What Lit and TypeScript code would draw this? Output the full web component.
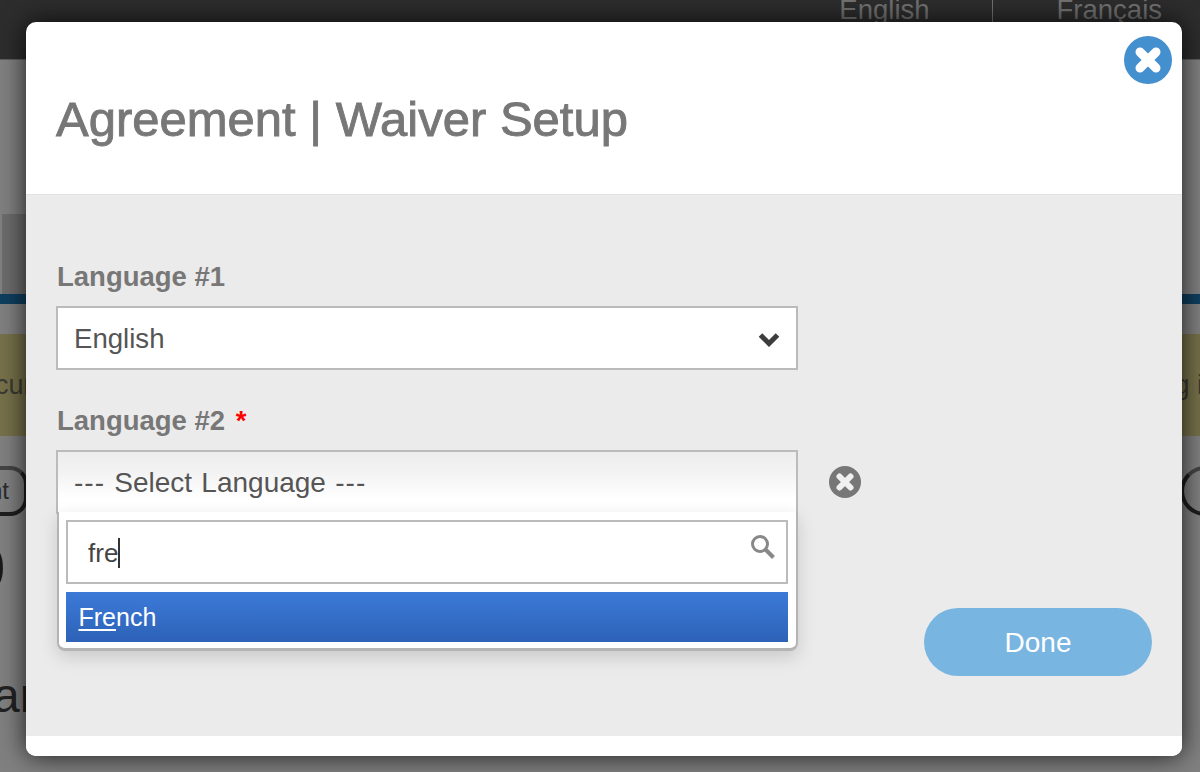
import { LitElement, html, css } from "lit";
import { customElement } from "lit/decorators.js";

const FONT = css`"Liberation Sans", Arial, sans-serif`;

@customElement("app-root")
export class AppRoot extends LitElement {
  static styles = css`
    :host { display: block; position: relative; width: 1200px; height: 772px; overflow: hidden; font-family: ${FONT}; background: #808080; }
    .page { height: 772px; display: flex; flex-direction: column; overflow: hidden; background: #808080; }
    .topbar { height: 60px; flex: none; background: #2d2d2d; display: flex; justify-content: flex-end; overflow: hidden; color: #737373; font-size: 27.5px; line-height: 24px; padding-right: 38px; box-sizing: border-box; border-bottom: 1px solid #5e5e5e; }
    .topbar span { display: block; margin-top: -2px; }
    .topbar .sep { width: 1px; height: 24px; background: #737373; margin: 0 64px 0 62px; }
    .tab { height: 80px; margin-top: 154px; background: #6c6c6c; width: 30px; margin-left: 2px; flex: none; }
    .line { height: 10px; flex: none; background: #0f3f5f; }
    .band { height: 102px; margin-top: 30px; flex: none; background: #76714a; display: flex; justify-content: space-between; align-items: center; font-size: 27px; color: #3a3a32; overflow: hidden; }
    .band span { white-space: nowrap; }
    .band .l { margin-left: -5px; }
    .band .r { margin-right: -18px; }
    .pills { height: 50px; margin-top: 30px; flex: none; display: flex; justify-content: space-between; }
    .pill { width: 70px; box-sizing: border-box; border: 4px solid #1e1e1e; border-top-color: #444; border-radius: 18px; font-size: 24px; line-height: 42px; color: #2a2a2a; text-align: right; padding-right: 15px; white-space: nowrap; }
    .pill.a { margin-left: -42px; }
    .pill.b { margin-right: -50px; border-radius: 25px; }
    .big { margin: 22px 0 0 -29px; font-size: 62px; line-height: 60px; font-weight: 700; color: #1a1a1a; flex: none; }
    .word { margin: 68px 0 0 -7px; font-size: 48px; line-height: 60px; color: #222; flex: none; }

    .modal { position: absolute; left: 26px; top: 22px; width: 1156px; height: 734px; background: #fff; border-radius: 10px; box-shadow: 0 0 26px rgba(0,0,0,.8); display: flex; flex-direction: column; overflow: hidden; }
    .head { height: 173px; flex: none; box-sizing: border-box; border-bottom: 1px solid #e2e2e2; padding: 69px 30px 0; }
    h1 { margin: 0; font-size: 49px; line-height: 56px; font-weight: 400; color: #777; -webkit-text-stroke: .9px #777; }
    .x { position: absolute; right: 10px; top: 14px; width: 48px; height: 48px; }
    .body { height: 541px; flex: none; background: #ebebeb; box-sizing: border-box; padding: 67px 30px 0; position: relative; }
    label { display: block; font-size: 27.5px; line-height: 30px; font-weight: 700; color: #777; padding-left: 1px; }
    label b { color: #f00; margin-left: 3px; }
    .field { width: 742px; height: 64px; box-sizing: border-box; border: 2px solid #bbb; background: #fff; margin-top: 14px; display: flex; align-items: center; justify-content: space-between; padding: 2px 16px 0; font-size: 27.6px; color: #555; }
    .l2 { margin-top: 36px; }
    .select2 { background: linear-gradient(#ededed, #f3f3f3 35%, #fff 75%); border-bottom: 0; font-size: 28px; padding-top: 0; word-spacing: 1.5px; }
    .dash { letter-spacing: 1px; }
    .row { display: flex; align-items: center; gap: 30px; }
    .clear { width: 34px; height: 34px; margin-top: 14px; }
    .drop { position: absolute; left: 31px; top: 317px; width: 741px; height: 139px; box-sizing: border-box; background: #fff; border: 2px solid #b4b4b4; border-top: 0; border-bottom-width: 3px; border-radius: 0 0 8px 8px; padding: 8px 8px 0 7px; box-shadow: 0 6px 18px rgba(0,0,0,.15); }
    .search { height: 64px; box-sizing: border-box; border: 2px solid #bbb; background: #fff; display: flex; align-items: center; justify-content: space-between; padding: 0 10px 0 20px; font-size: 26px; color: #444; }
    .typed { display: flex; align-items: center; padding-top: 2px; }
    .caret { width: 2px; height: 30px; background: #333; }
    .opt { height: 50px; margin-top: 8px; background: linear-gradient(#3c7ad8, #2d62b7); color: #fff; font-size: 25px; line-height: 50px; padding-left: 12.5px; }
    .opt u { text-underline-offset: 3px; }
    .done { position: absolute; left: 898px; top: 413px; width: 228px; height: 68px; border: 0; padding: 2px 0 0; border-radius: 34px; background: #79b5e1; color: #fff; font: 28px ${FONT}; }
    .foot { flex: 1; background: #fff; }
    .glass { margin-top: -10px; }
  `;

  render() {
    return html`
      <div class="page">
        <div class="topbar"><span>English</span><span class="sep"></span><span>Français</span></div>
        <div class="tab"></div>
        <div class="line"></div>
        <div class="band"><span class="l">cur</span><span class="r">g in</span></div>
        <div class="pills"><div class="pill a">nt</div><div class="pill b"></div></div>
        <div class="big">0</div>
        <div class="word">ar</div>
      </div>
      <div class="modal">
        <div class="head"><h1>Agreement | Waiver Setup</h1></div>
        <svg class="x" viewBox="0 0 48 48"><circle cx="24" cy="24" r="24" fill="#4490cf"/><path d="M16 16 L32 32 M32 16 L16 32" stroke="#fff" stroke-width="9" stroke-linecap="round"/></svg>
        <div class="body">
          <label>Language #1</label>
          <div class="field"><span>English</span>
            <svg width="22" height="18" viewBox="0 0 22 18"><path d="M2.5 5 L11 13.5 L19.5 5" fill="none" stroke="#3d3d3d" stroke-width="5"/></svg>
          </div>
          <label class="l2">Language #2 <b>*</b></label>
          <div class="row">
            <div class="field select2"><span><span class="dash">---</span> Select Language <span class="dash">---</span></span></div>
            <svg class="clear" viewBox="0 0 34 34"><circle cx="17" cy="17" r="16" fill="#777"/><path d="M11.5 11.5 L22.5 22.5 M22.5 11.5 L11.5 22.5" stroke="#f0f0f0" stroke-width="6" stroke-linecap="round"/></svg>
          </div>
          <div class="drop">
            <div class="search"><span class="typed">fre<i class="caret"></i></span>
              <svg class="glass" width="26" height="26" viewBox="0 0 26 26"><circle cx="10" cy="10" r="7.5" fill="none" stroke="#888" stroke-width="3"/><path d="M15.5 15.5 L23.5 23.5" stroke="#888" stroke-width="4"/></svg>
            </div>
            <div class="opt"><u>Fre</u>nch</div>
          </div>
          <button class="done">Done</button>
        </div>
        <div class="foot"></div>
      </div>
    `;
  }
}
